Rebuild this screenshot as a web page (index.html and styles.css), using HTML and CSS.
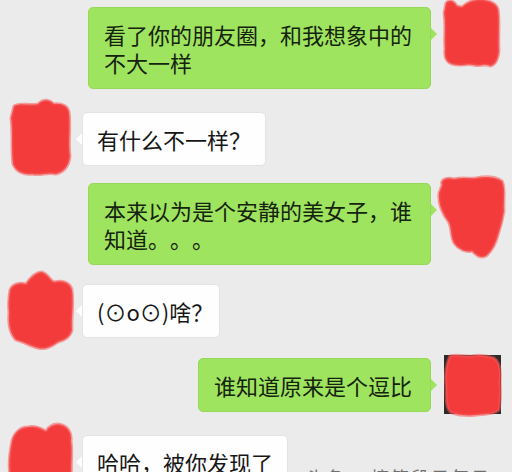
FILE: index.html
```html
<!DOCTYPE html>
<html lang="zh">
<head>
<meta charset="utf-8">
<title>聊天</title>
<link rel="stylesheet" href="styles.css">
</head>
<body>
<div class="chat">
  <div class="row right">
    <div class="bubble green">看了你的朋友圈，和我想象中的不大一样</div>
    <div class="avatar">
      <svg viewBox="0 0 60 50" width="60" height="50"><path class="blob" d="M6,-4 C10,-8 14,-6 17,-1 L22,0 C27,-5 34,-8 44,-7 C50,-6 56,-4 58,2 C60,14 58,30 59,44 C58,52 56,58 50,59 C44,56 40,60 34,58 C28,56 20,60 12,57 C6,55 4,50 5,42 C4,30 6,18 4,6 Z"/></svg>
    </div>
  </div>
  <div class="row left g23">
    <div class="avatar">
      <svg viewBox="0 0 60 50" width="60" height="50"><path class="blob" d="M4,-6 C10,-10 20,-6 28,-8 C34,-14 40,-12 44,-8 C52,-9 58,-6 59,0 C61,14 58,30 60,44 C59,54 54,60 46,62 C38,60 30,64 22,62 C14,63 6,60 3,52 C1,38 3,20 1,6 Z"/></svg>
    </div>
    <div class="bubble white">有什么不一样？</div>
  </div>
  <div class="row right g17">
    <div class="bubble green">本来以为是个安静的美女子，谁知道。。。</div>
    <div class="avatar">
      <svg viewBox="0 0 60 50" width="60" height="50"><path class="blob" d="M2,2 C0,-4 8,-6 14,-4 C22,-6 30,-4 36,-5 C46,-7 56,-6 62,-2 C66,6 63,18 64,28 C62,40 60,46 58,52 C56,60 52,68 46,73 C40,76 36,72 32,68 C26,70 18,66 14,60 C10,52 12,44 8,38 C2,30 -2,20 -1,10 Z"/></svg>
    </div>
  </div>
  <div class="row left g19">
    <div class="avatar">
      <svg viewBox="0 0 60 50" width="60" height="50"><path class="blob" d="M0,6 C2,0 10,-2 16,0 C20,-6 26,-12 32,-12 C38,-10 40,-4 44,-2 C52,-4 60,-2 62,6 C64,20 61,36 62,46 C60,54 54,56 48,58 C42,62 36,66 28,64 C20,62 14,58 6,56 C0,50 -2,40 -1,28 C-2,18 -1,12 0,6 Z"/></svg>
    </div>
    <div class="bubble white tight">(⊙o⊙)啥？</div>
  </div>
  <div class="row right g20">
    <div class="bubble green">谁知道原来是个逗比</div>
    <div class="avatar">
      <svg viewBox="0 0 60 50" width="60" height="50"><rect class="photo" x="4" y="-3" width="57" height="59"/><path class="blob" d="M10,-2 C18,-4 26,-1 32,-2 C40,-4 48,-2 54,0 C60,4 61,14 60,24 C61,36 60,46 59,52 C54,57 44,56 36,57 C28,58 18,57 12,55 C6,52 6,42 6,30 C5,20 5,8 10,-2 Z"/></svg>
    </div>
  </div>
  <div class="row left g23">
    <div class="avatar">
      <svg viewBox="0 0 60 50" width="60" height="50"><path class="blob" d="M2,6 C4,-2 10,-8 18,-8 C26,-10 32,-6 36,-4 C40,-10 46,-12 52,-10 C58,-8 62,-2 61,6 C63,20 60,30 62,44 L62,60 L-2,60 L0,40 C-2,28 0,16 2,6 Z"/></svg>
    </div>
    <div class="bubble white">哈哈，被你发现了</div>
  </div>
</div>
<div class="watermark">头条 @搞笑段子每日一乐</div>
</body>
</html>
```

FILE: styles.css
```css
html, body {
  margin: 0;
  padding: 0;
}
body {
  width: 512px;
  height: 472px;
  overflow: hidden;
  background: #ebebeb;
  font-family: "Noto Sans CJK SC", "Noto Sans", sans-serif;
  position: relative;
}
.chat {
  display: flex;
  flex-direction: column;
  padding: 7px 12px 0 10px;
}
.row {
  display: flex;
  align-items: flex-start;
}
.row.g17 { margin-top: 17px; }
.row.g19 { margin-top: 19px; }
.row.g20 { margin-top: 20px; }
.row.g23 { margin-top: 23px; }
.row.right {
  justify-content: flex-end;
  gap: 9px;
}
.row.left {
  justify-content: flex-start;
  gap: 12px;
}
.avatar {
  width: 60px;
  height: 50px;
  flex: none;
}
.avatar svg {
  display: block;
  overflow: visible;
}
.blob {
  fill: #f43b3b;
  stroke: rgba(246, 90, 90, 0.55);
  stroke-width: 3;
  stroke-linejoin: round;
}
.photo {
  fill: #2e2a2a;
}
.bubble {
  position: relative;
  box-sizing: border-box;
  font-size: 22px;
  line-height: 28px;
  padding: 12px 18px 12px 15px;
  border-radius: 5px;
  color: #161616;
  word-break: break-all;
  text-spacing-trim: space-all;
}
.bubble.green {
  background: #9fe45f;
  border: 1px solid #94d958;
  max-width: 343px;
  color: #15230f;
}
.bubble.white {
  background: #fefefe;
  border: 1px solid #e3e3e3;
  padding: 12px 14px 12px 14px;
}
.bubble.white.tight {
  padding-right: 6px;
}
.bubble::after {
  content: "";
  position: absolute;
  top: 20px;
  width: 0;
  height: 0;
  border-top: 6px solid transparent;
  border-bottom: 6px solid transparent;
}
.bubble.green::after {
  right: -7px;
  border-left: 6px solid #9fe45f;
}
.bubble.white::after {
  left: -7px;
  border-right: 6px solid #fefefe;
}
.watermark {
  position: absolute;
  left: 306px;
  top: 466px;
  font-size: 18px;
  line-height: 22px;
  color: rgba(70, 70, 70, 0.75);
  letter-spacing: 2px;
  white-space: nowrap;
}
```
